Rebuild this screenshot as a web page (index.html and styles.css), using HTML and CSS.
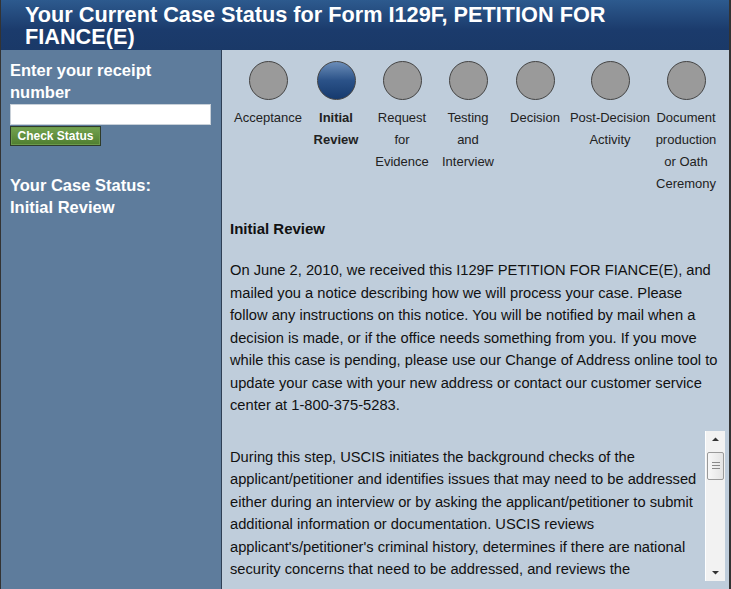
FILE: index.html
```html
<!DOCTYPE html>
<html lang="en">
<head>
    <meta charset="UTF-8">
    <title>Case Status</title>
    <link rel="stylesheet" href="styles.css">
</head>
<body>

<div class="page">
    <div class="title-bar">
        <h1>Your Current Case Status for Form I129F, PETITION FOR FIANCE(E)</h1>
    </div>

    <div class="layout">
        <div class="sidebar">
            <form class="receipt-form">
                <label for="receipt">Enter your receipt number</label>
                <input type="text" id="receipt">
                <button type="button">Check Status</button>
            </form>
            <div class="case-status">Your Case Status:<br>Initial Review</div>
        </div>

        <div class="content">
            <ul class="steps">
                <li class="step step-1"><span class="dot"></span>Acceptance</li>
                <li class="step step-2 current"><span class="dot"></span>Initial<br>Review</li>
                <li class="step step-3"><span class="dot"></span>Request<br>for<br>Evidence</li>
                <li class="step step-4"><span class="dot"></span>Testing<br>and<br>Interview</li>
                <li class="step step-5"><span class="dot"></span>Decision</li>
                <li class="step step-6"><span class="dot"></span>Post-Decision<br>Activity</li>
                <li class="step step-7"><span class="dot"></span>Document<br>production<br>or Oath<br>Ceremony</li>
            </ul>

            <h2>Initial Review</h2>
            <p class="summary">On June 2, 2010, we received this I129F PETITION FOR FIANCE(E), and mailed you a notice describing how we will process your case. Please follow any instructions on this notice. You will be notified by mail when a decision is made, or if the office needs something from you. If you move while this case is pending, please use our Change of Address online tool to update your case with your new address or contact our customer service center at 1-800-375-5283.</p>

            <div class="scroll-box">
                <div class="scroll-text">
                    <p>During this step, USCIS initiates the background checks of the applicant/petitioner and identifies issues that may need to be addressed either during an interview or by asking the applicant/petitioner to submit additional information or documentation. USCIS reviews applicant's/petitioner's criminal history, determines if there are national security concerns that need to be addressed, and reviews the applicant's/petitioner's immigration history.</p>
                </div>
                <div class="scrollbar">
                    <svg class="arrow" width="19" height="17" viewBox="0 0 19 17"><path d="M6 10 L13 10 L9.5 6.5 Z" fill="#333"/></svg>
                    <div class="track">
                        <div class="thumb">
                            <svg width="8" height="9" viewBox="0 0 8 9"><path d="M0 1.5H8M0 4.5H8M0 7.5H8" stroke="#8a8a8a" stroke-width="1"/></svg>
                        </div>
                    </div>
                    <svg class="arrow" width="19" height="17" viewBox="0 0 19 17"><path d="M6 7 L13 7 L9.5 10.5 Z" fill="#333"/></svg>
                </div>
            </div>
        </div>
    </div>
</div>

</body>
</html>
```

FILE: styles.css
```css
body {
    margin: 0;
    font-family: "Liberation Sans", Arial, sans-serif;
    color: #111;
    background-color: #fff;
}
.page {
    width: 728px;
    height: 589px;
    border-left: 1px solid #333;
    border-right: 2px solid #333;
    overflow: hidden;
    display: flex;
    flex-direction: column;
}

/* header */
.title-bar {
    background: linear-gradient(#2d5a8e, #1b3b6c 60%, #1a3968);
    padding: 4px 60px 2px 24px;
}
.title-bar h1 {
    margin: 0;
    font-size: 21.7px;
    line-height: 22px;
    color: #fff;
    font-weight: bold;
}

.layout {
    flex: 1;
    display: flex;
}

/* left column */
.sidebar {
    width: 201px;
    flex-shrink: 0;
    background-color: #5e7c9c;
    border-right: 1px solid #2e3f55;
    padding: 9px 10px 0 9px;
    color: #fff;
    font-weight: bold;
    font-size: 16.5px;
    line-height: 22px;
}
.receipt-form label {
    display: block;
}
.receipt-form input {
    display: block;
    box-sizing: border-box;
    width: 201px;
    height: 21px;
    margin: 1px 0 0;
    border: 1px solid #c8d0d8;
    background-color: #fff;
}
.receipt-form button {
    display: block;
    margin-top: 1px;
    width: 91px;
    height: 20px;
    padding: 0;
    border: 1px solid #2f3b2a;
    background: linear-gradient(#74a350, #4f7e2f);
    color: #fff;
    font-family: "Liberation Sans", Arial, sans-serif;
    font-weight: bold;
    font-size: 12px;
    line-height: 17px;
    box-shadow: inset 0 0 0 1px #6b9a4a;
}
.case-status {
    margin-top: 28px;
}

/* main column */
.content {
    flex: 1;
    background-color: #bfcddb;
    padding: 0 8px 0 8px;
}

.steps {
    list-style: none;
    margin: 0;
    padding: 11px 0 0;
    margin-left: -1px;
    display: flex;
    font-size: 13px;
    line-height: 22px;
    color: #222;
}
.step {
    text-align: center;
    flex-shrink: 0;
}
.step .dot {
    display: block;
    box-sizing: border-box;
    width: 39px;
    height: 39px;
    margin: 0 auto 7px;
    border-radius: 50%;
    border: 1.5px solid #444;
    background-color: #9a9a9a;
}
.step.current {
    font-weight: bold;
}
.step.current .dot {
    background: linear-gradient(#6b8db8, #2b5288 50%, #163a6e);
}
.step-1 { width: 78px; }
.step-2 { width: 58px; }
.step-3 { width: 74px; }
.step-4 { width: 58px; }
.step-5 { width: 76px; }
.step-6 { width: 82px; margin: 0 -4px; }
.step-7 { width: 78px; }

.content h2 {
    margin: 23px 0 0;
    font-size: 15px;
    line-height: 22px;
}
.content p {
    margin: 20px 0 0;
    font-size: 14.7px;
    line-height: 22.5px;
}
.content .summary {
    margin-top: 19px;
    margin-right: 4px;
}

.scroll-box {
    display: flex;
    height: 150px;
    margin-top: 14px;
}
.scroll-text {
    flex: 1;
    overflow: hidden;
    padding-right: 2px;
}
.scroll-text p {
    margin-top: 15px;
}
.scrollbar {
    width: 19px;
    flex-shrink: 0;
    display: flex;
    flex-direction: column;
    background-color: #f2f2f2;
    border-left: 1px solid #fff;
}
.scrollbar .arrow {
    display: block;
}
.track {
    flex: 1;
    padding-top: 4px;
}
.thumb {
    box-sizing: border-box;
    height: 28px;
    margin: 0 1px;
    border: 1px solid #9a9a9a;
    border-radius: 2px;
    background: linear-gradient(90deg, #f7f7f7, #e4e4e4);
    display: flex;
    align-items: center;
    justify-content: center;
}
```
